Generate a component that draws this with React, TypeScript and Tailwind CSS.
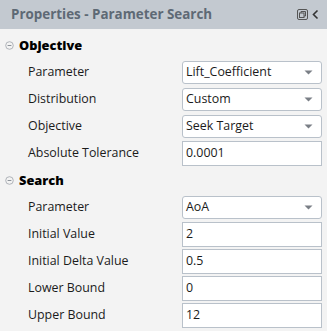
import React from "react";

const font = { fontFamily: '"Open Sans", "Noto Sans", sans-serif' };

function Caret() {
  return (
    <svg width="9" height="5" viewBox="0 0 9 5" className="shrink-0">
      <path d="M0.5 0.5 L8.5 0.5 L4.5 4.5 Z" fill="#7a7f86" />
    </svg>
  );
}

function SelectBox({ value }: { value: string }) {
  return (
    <div className="flex h-[23px] w-[140px] items-center justify-between rounded-[3px] border border-[#b9c1ca] bg-white pl-[3px] pr-[8px] text-[12.4px] text-[#1b1b1b]">
      <span>{value}</span>
      <Caret />
    </div>
  );
}

function InputBox({ value }: { value: string }) {
  return (
    <div className="flex h-[25px] w-[140px] items-center border border-[#b9c1ca] bg-white pl-[3px] text-[12.4px] text-[#1b1b1b]">
      {value}
    </div>
  );
}

function Row({ label, children }: { label: string; children: React.ReactNode }) {
  return (
    <div className="flex h-[27px] items-center justify-between pl-[28px] pr-[5px]">
      <span className="text-[12.4px] text-[#1b1b1b]">{label}</span>
      {children}
    </div>
  );
}

function Section({ title }: { title: string }) {
  return (
    <div className="flex h-[27px] items-center gap-[5px] pl-[5px]">
      <svg width="9" height="9" viewBox="0 0 9 9">
        <circle cx="4.5" cy="4.5" r="3.8" fill="none" stroke="#a8adb3" strokeWidth="0.9" />
        <line x1="2.6" y1="4.5" x2="6.4" y2="4.5" stroke="#8d939a" strokeWidth="1" />
      </svg>
      <span className="text-[12.8px] font-extrabold text-black">{title}</span>
    </div>
  );
}

export default function App() {
  return (
    <div className="h-[331px] w-[327px] overflow-hidden bg-[#f3f3f3]" style={font}>
      <div className="flex h-[29px] items-center justify-between bg-[#c3c9d0] pl-[11px] pr-[8px]">
        <span className="text-[13.4px] font-bold text-[#5e6975]">Properties - Parameter Search</span>
        <div className="flex items-center gap-[4px]">
          <svg width="11" height="11" viewBox="0 0 11 11">
            <rect x="0.5" y="0.5" width="10" height="10" rx="1.5" fill="none" stroke="#555" strokeWidth="1" />
            <rect x="2.5" y="4" width="4.5" height="4.5" fill="none" stroke="#555" strokeWidth="1" />
            <path d="M4 4 V2.5 H8.5 V7 H7" fill="none" stroke="#555" strokeWidth="1" />
          </svg>
          <svg width="7" height="11" viewBox="0 0 7 11">
            <path d="M5.5 1.5 L1.5 5.5 L5.5 9.5" fill="none" stroke="#333" strokeWidth="1.6" />
          </svg>
        </div>
      </div>
      <div className="pt-[3px]">
        <Section title="Objective" />
        <Row label="Parameter"><SelectBox value="Lift_Coefficient" /></Row>
        <Row label="Distribution"><SelectBox value="Custom" /></Row>
        <Row label="Objective"><SelectBox value="Seek Target" /></Row>
        <Row label="Absolute Tolerance"><InputBox value="0.0001" /></Row>
        <Section title="Search" />
        <Row label="Parameter"><SelectBox value="AoA" /></Row>
        <Row label="Initial Value"><InputBox value="2" /></Row>
        <Row label="Initial Delta Value"><InputBox value="0.5" /></Row>
        <Row label="Lower Bound"><InputBox value="0" /></Row>
        <Row label="Upper Bound"><InputBox value="12" /></Row>
      </div>
    </div>
  );
}
